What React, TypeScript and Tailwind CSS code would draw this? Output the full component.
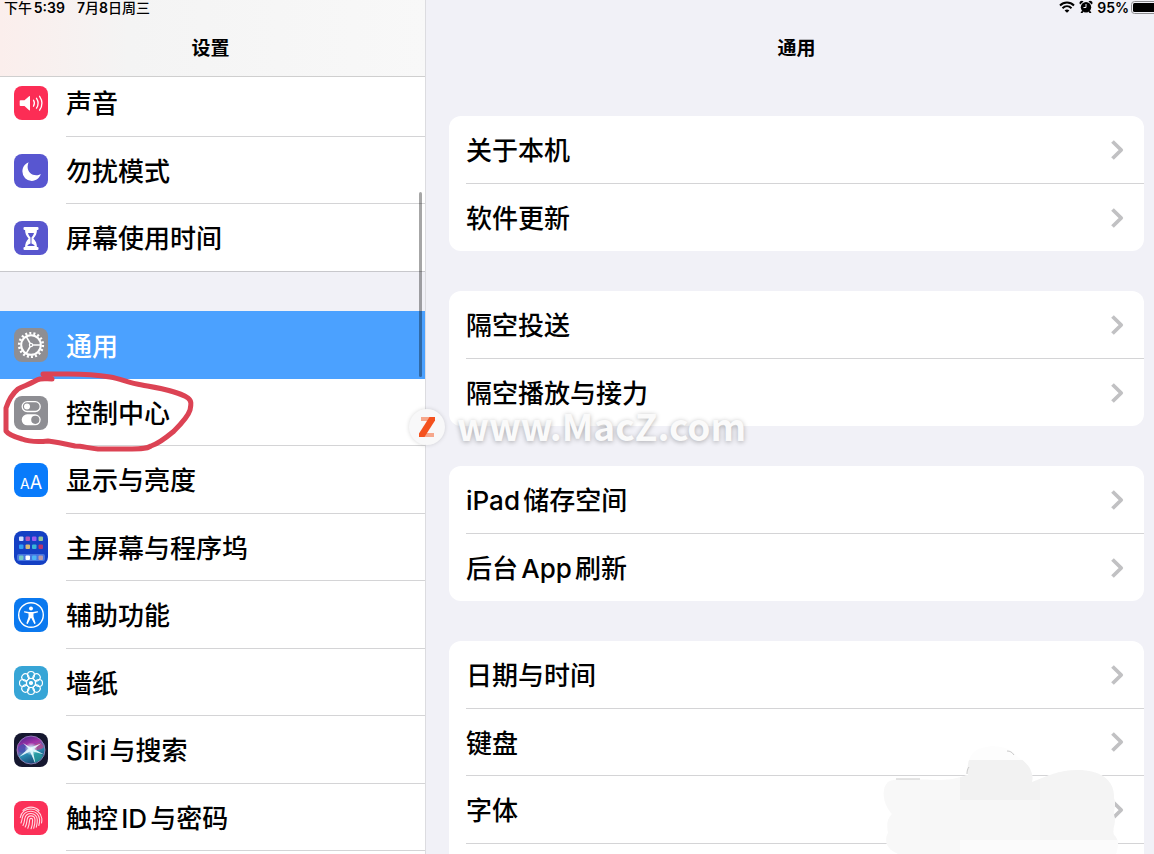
import type { ReactNode } from "react";

type Item = { label: string; icon: ReactNode; tile: string; circled?: boolean };

/* Sidebar icons, all on a 34x34 tile */

const SoundIcon = () => (
  <svg viewBox="0 0 34 34" className="size-full" fill="none" stroke="#fff" strokeLinecap="round">
    <path d="M6.5 14.3h4l4.6-4.1c.5-.4.9-.2.9.5v13c0 .7-.4.9-.9.5l-4.6-4.1h-4c-.5 0-.8-.3-.8-.8V15c0-.4.3-.7.8-.7z" fill="#fff" stroke="none" />
    <path d="M19.5 14.2c1.1 1.8 1.1 4.2 0 6M22.5 12.3c2 3 2 6.8 0 9.8M25.6 10.3c2.9 4.2 2.9 9.6 0 13.8" strokeWidth="1.3" />
  </svg>
);

const MoonIcon = () => (
  <svg viewBox="0 0 34 34" className="size-full">
    <path d="M14.6 8.3a10 10 0 0 0-1 4.5c0 5 4 8.5 8.6 8.5 1.7 0 3.2-.3 4.6-1.2-1.3 4.2-4.7 6.8-9 6.8A9.4 9.4 0 0 1 8.4 17.5c0-4.2 2.5-7.7 6.2-9.2z" fill="#fff" />
  </svg>
);

const HourglassIcon = () => (
  <svg viewBox="0 0 34 34" className="size-full" fill="#fff">
    <rect x="9.5" y="6" width="15" height="3" rx="1" />
    <rect x="9.5" y="26" width="15" height="3" rx="1" />
    <path d="M11 8h12c0 4.5-1.2 6.8-3.6 9.5 2.4 2.7 3.6 5 3.6 9.5H11c0-4.5 1.2-6.8 3.6-9.5C12.2 14.8 11 12.5 11 8z" />
    <path d="M14 12h6c-.4 1.7-1.4 3.2-2.5 4.4v6.2c1.5.5 2.7 1.3 3.3 2.4h-7.6c.6-1.1 1.8-1.9 3.3-2.4v-6.2C15.4 15.2 14.4 13.7 14 12z" fill="#5856ce" />
  </svg>
);

const GearIcon = () => (
  <svg viewBox="0 0 34 34" className="size-full" fill="none" stroke="#fff">
    <circle cx="17" cy="17" r="11.8" strokeWidth="2.6" strokeDasharray="2 2.119" />
    <circle cx="17" cy="17" r="9.8" strokeWidth="2" />
    <circle cx="17" cy="17" r="1.6" strokeWidth="1.2" />
    <path d="M18.500 17H26.500M16.200 15.500 12.300 8.700M16.200 18.500l-3.900 6.800" strokeWidth="1.6" />
  </svg>
);

const ControlIcon = () => (
  <svg viewBox="0 0 34 34" className="size-full">
    <rect x="8.2" y="5.7" width="18" height="9.8" rx="4.9" fill="none" stroke="#fff" strokeWidth="1.3" />
    <circle cx="13" cy="10.6" r="3" fill="#fff" />
    <rect x="7.7" y="18.3" width="19" height="11" rx="5.5" fill="#fff" />
    <circle cx="21.3" cy="23.8" r="4.1" fill="#8e8e93" />
  </svg>
);

const DisplayIcon = () => (
  <span className="flex size-full items-baseline justify-center pt-1.5 font-['Inter'] font-normal leading-6 text-white">
    <span className="text-sm">A</span>
    <span className="text-lg">A</span>
  </span>
);

const dots = [
  ["#cfe0ff", "#b356b8", "#9a5cf0", "#8fc49a"],
  ["#2f9df5", "#d6b878", "#38b6d8", "#b5336f"],
  ["#73c9c4", "#ffffff", "#4cb4f5", "#b99aa8"],
];

const HomeScreenIcon = () => (
  <svg viewBox="0 0 34 34" className="size-full">
    <rect x="3" y="23" width="28" height="7" rx="2" fill="#4775e0" />
    {dots.map((row, y) =>
      row.map((fill, x) => (
        <rect key={`${x}-${y}`} x={5 + x * 6.5} y={[5.5, 13.5, 24.5][y]} width="4.5" height="4.5" rx="1" fill={fill} />
      )),
    )}
  </svg>
);

const AccessibilityIcon = () => (
  <svg viewBox="0 0 34 34" className="size-full" fill="#fff">
    <circle cx="17" cy="17" r="12.3" fill="none" stroke="#fff" strokeWidth="1.4" />
    <circle cx="17" cy="10.5" r="2" />
    <path d="M10.7 13.2 15 13.9h4l4.3-.7c1-.1 1.1 1.2.2 1.4l-4 1v3.2l2 6c.3 1.1-1 1.5-1.4.6L17.3 20h-.6l-2.8 5.400c-.4.9-1.7.5-1.400-.6l2-6v-3.200l-4-1c-.9-.2-.8-1.500.2-1.400z" />
  </svg>
);

const WallpaperIcon = () => (
  <svg viewBox="0 0 34 34" className="size-full" fill="none" stroke="#fff" strokeWidth="1.2">
    {[0, 45, 90, 135, 180, 225, 270, 315].map((deg) => (
      <circle key={deg} cx="17" cy="9" r="3.5" transform={`rotate(${deg} 17 17)`} />
    ))}
    <circle cx="17" cy="17" r="4.5" />
    <circle cx="17" cy="17" r="1.5" fill="#fff" />
  </svg>
);

const SiriIcon = () => (
  <svg viewBox="0 0 34 34" className="size-full">
    <defs>
      <linearGradient id="orb" x1="0.2" y1="0" x2="0.6" y2="1">
        <stop offset="0" stopColor="#4a2690" />
        <stop offset="0.35" stopColor="#a834a8" />
        <stop offset="0.6" stopColor="#2a8fb4" />
        <stop offset="1" stopColor="#17406e" />
      </linearGradient>
      <radialGradient id="glow">
        <stop offset="0" stopColor="#fff" />
        <stop offset="0.4" stopColor="#d8f8ff" stopOpacity="0.7" />
        <stop offset="1" stopColor="#fff" stopOpacity="0" />
      </radialGradient>
    </defs>
    <circle cx="17" cy="17" r="14" fill="url(#orb)" stroke="#9f8cc4" strokeWidth="0.8" />
    <path d="M16 16C12 10 7 10 4 15c0 6 5 6 12 1z" fill="#3457b4" opacity="0.7" />
    <path d="M18 16c4-8 9-8 12-2-2 3-8 4-12 2z" fill="#c8408f" opacity="0.7" />
    <path d="M18 18c5 0 9 2 11 5-3 5-7 7-9 6z" fill="#2bb5a8" opacity="0.6" />
    <path d="M5 24 14.500 15.500 9 10l7.500 4.500L27 10.500l-7 5.500 10 5.500-11-3 2.500 12.500-5.500-12.500z" fill="#e9fdff" opacity="0.9" />
    <circle cx="17" cy="16" r="6.5" fill="url(#glow)" />
  </svg>
);

const TouchIdIcon = () => (
  <svg viewBox="0 0 34 34" className="size-full" fill="none" stroke="#ffdbe2" strokeWidth="1.1" strokeLinecap="round">
    <path d="M9 9.5C13.5 5 20.5 5 25 9.5" />
    <path d="M6.3 16.5C7.5 10.5 12 8 17 8s10 3.5 10.8 9.5c.2 1.5 0 3-.3 4.5" />
    <path d="M7 22c1-2.5 1-4 1.4-5.5.9-4 4.6-6.3 8.6-6.3 4.8 0 8.4 3.6 8.6 8.3.1 2-.2 4-.8 6" />
    <path d="M9 24.5c1.4-2.5 1.4-5 1.8-7 .6-3 3.2-5 6.2-5 3.5 0 6.2 2.7 6.3 6.3.1 2.5-.3 5-1 7.4" />
    <path d="M11.2 26c1.7-3 1.6-5.5 2-7.7.3-2 1.9-3.4 3.8-3.4 2.3 0 3.9 1.7 4 4 0 2.9-.4 5.7-1.3 8.3" />
    <path d="M13.8 27.2c1.5-3 1.5-5.7 1.8-8.2.1-1 .7-1.6 1.5-1.6.9 0 1.5.7 1.5 1.6 0 3-.4 6-1.5 8.8" />
  </svg>
);

const soundItems: Item[] = [
  { label: "声音", icon: <SoundIcon />, tile: "bg-[#fc2d55]" },
  { label: "勿扰模式", icon: <MoonIcon />, tile: "bg-[#5856d0]" },
  { label: "屏幕使用时间", icon: <HourglassIcon />, tile: "bg-[#5856ce]" },
];

const generalItems: Item[] = [
  { label: "通用", icon: <GearIcon />, tile: "bg-[#8e8e93]" },
  { label: "控制中心", icon: <ControlIcon />, tile: "bg-[#8e8e93]", circled: true },
  { label: "显示与亮度", icon: <DisplayIcon />, tile: "bg-[#097bfb]" },
  { label: "主屏幕与程序坞", icon: <HomeScreenIcon />, tile: "bg-[#1440c4]" },
  { label: "辅助功能", icon: <AccessibilityIcon />, tile: "bg-[#0b79ef]" },
  { label: "墙纸", icon: <WallpaperIcon />, tile: "bg-[#37a5d6]" },
  { label: "Siri与搜索", icon: <SiriIcon />, tile: "bg-[#15172f]" },
  { label: "触控ID与密码", icon: <TouchIdIcon />, tile: "bg-[#fb3058]" },
];

const detailGroups = [
  { labels: ["关于本机", "软件更新"] },
  { labels: ["隔空投送", "隔空播放与接力"] },
  { labels: ["iPad储存空间", "后台App刷新"] },
  { labels: ["日期与时间", "键盘", "字体"], continues: true },
];

function Scribble() {
  return (
    <svg
      viewBox="0 367 200 90"
      className="pointer-events-none absolute -top-3 left-0 z-10 h-[90px] w-[200px]"
      fill="none"
      stroke="#dc4354"
      strokeWidth="5"
      strokeLinecap="round"
      strokeLinejoin="round"
    >
      <path d="M43 374H68C82 374 92 374 110 377C122 379 128 383 142 385C158 388 178 391 188 398C192 401 191 405 190 410C188 417 180 425 174 431C168 436 160 443 151 446C146 449 140 449 132 449H98C88 448 82 446 75 446C66 444 57 442 48 441C39 442 30 442 22 439C15 437 8 434 6 431V408C8 402 12 394 18 389C24 386 30 384 37 380C41 378 46 379 52 379" />
    </svg>
  );
}

function SidebarRow({ item, selected, last }: { item: Item; selected?: boolean; last?: boolean }) {
  return (
    <li className="relative odd:h-[68px] even:h-[67px]">
      <a
        href="#"
        aria-current={selected ? "page" : undefined}
        className={`flex h-full items-center pl-3.5 ${selected ? "bg-[#4ba1ff] text-white" : "bg-white"} ${last ? "border-b border-[#c8c8cc]" : ""}`}
      >
        <span className={`size-[34px] shrink-0 overflow-hidden rounded-lg ${item.tile}`}>{item.icon}</span>
        <span
          className={`ml-[18px] flex h-full flex-1 items-center pt-[3px] ${selected || last ? "" : "border-b border-[#d4d4d6]"}`}
        >
          {item.label}
        </span>
      </a>
      {item.circled && <Scribble />}
    </li>
  );
}

function Chevron() {
  return (
    <svg viewBox="0 0 14 22" className="mr-5 h-[22px] w-3.5 shrink-0" fill="none" stroke="#c1c1c3" strokeWidth="3.8" strokeLinejoin="round">
      <path d="M2.5 2.5 11.2 11l-8.7 8.5" />
    </svg>
  );
}

function StatusIcons() {
  return (
    <div className="flex h-3.5 items-center justify-end overflow-hidden text-sm font-semibold leading-none">
      <svg viewBox="0 0 16 12" className="mr-1 h-3 w-4" fill="none" stroke="#000" strokeWidth="2">
        <path d="M1 4.5c4-4 10-4 14 0M3.5 7.2c2.6-2.5 6.4-2.5 9 0" />
        <path d="M8 11.8 5.6 9.4c1.4-1.2 3.4-1.2 4.8 0z" fill="#000" stroke="none" />
      </svg>
      <svg viewBox="0 0 14 14" className="mr-1 size-3.5" fill="#000">
        <circle cx="7" cy="7.3" r="5.2" />
        <path d="M1.2 4.5A2 2 0 0 1 4.5 1.5zM12.8 4.5A2 2 0 0 0 9.5 1.5zM3 10.5 1.5 13h2l1-1.200zM11 10.500l1.500 2.500h-2l-1-1.200z" />
        <path d="M7 4v3.500H4.500" fill="none" stroke="#f1f1f7" strokeWidth="1" />
      </svg>
      <span className="pt-px">95%</span>
      <svg viewBox="0 0 23 13" className="ml-0.5 h-[13px] w-[23px]">
        <rect x="0.5" y="0.5" width="27" height="12" rx="3" fill="none" stroke="#8d8d90" />
        <rect x="2" y="2" width="24" height="9" rx="1.5" fill="#000" />
      </svg>
    </div>
  );
}

function Watermark() {
  return (
    <div className="pointer-events-none absolute left-[409px] top-[403px] flex h-12 items-center gap-3">
      <span className="flex size-9 items-center justify-center rounded-full bg-[#f8f8f9] shadow-[0_0_4px_rgba(0,0,0,0.15)]">
        <svg viewBox="0 0 18 22" className="h-[22px] w-[18px]">
          <path d="M3 1h14v4H3z" fill="#f6a78c" />
          <path d="M1 17h15v4H1z" fill="#f6a78c" />
          <path d="M11.5 1H17v3.5L6.5 21H1v-3.5z" fill="#f4511e" />
        </svg>
      </span>
      <span className="pb-1 font-['Noto_Sans_CJK_SC'] text-[37px] font-bold text-[#fafafa] [text-shadow:0_1px_5px_rgba(0,0,0,0.3)]">
        www.MacZ.com
      </span>
    </div>
  );
}

/* Soft mosaic patch over the lower right corner */
function Smudge() {
  return (
    <svg viewBox="880 744 240 110" className="pointer-events-none absolute bottom-0 right-[34px] h-[110px] w-60">
      <defs>
        <clipPath id="smudge">
          <path d="M888 782C898 777 920 780 940 780C952 780 960 777 968 775C966 764 970 750 982 748C996 744 1010 747 1018 757C1030 764 1034 774 1032 782C1048 776 1058 770 1078 770C1100 770 1115 780 1114 798C1117 806 1112 812 1115 819C1115 826 1112 830 1114 835C1120 840 1118 848 1116 854H898C886 849 884 840 888 833C887 826 886 820 892 814C884 806 880 790 888 782Z" />
        </clipPath>
      </defs>
      <g clipPath="url(#smudge)">
        <path fill="#fdfdfd" d="M880 744h240v110H880z" />
        <path fill="#f8f8f8" d="M880 760h80v80h-80z" />
        <path fill="#f2f2f2" d="M960 760h80v40h-80z" />
        <path fill="#f4f4f4" d="M1040 760h80v40h-80z" />
        <path fill="#f7f7f7" d="M920 800h120v40H920z" />
        <path fill="#f5f5f5" d="M1040 800h80v40h-80z" />
        <path fill="#f8f8f8" d="M880 840h80v14h-80z" />
        <path fill="#fbfbfb" d="M960 840h160v14H960z" />
      </g>
      <path d="M967 774c0-3 .5-5 2-7M1007 751c3 0 5 1 7 4M896 779h24" fill="none" stroke="#c9c9c9" />
    </svg>
  );
}

export default function App() {
  return (
    <div className="relative flex h-screen overflow-hidden bg-[#f1f1f7] font-['Inter','Noto_Sans_CJK_SC',sans-serif] text-[26px] font-medium leading-8 text-black [text-autospace:normal]">
      {/* Sidebar */}
      <aside className="relative w-[426px] shrink-0 border-r border-[#dcdce0]">
        <header className="relative z-10 h-[77px] border-b border-[#cfcfcf] bg-[#f6f6f6] bg-linear-to-r from-[#fbeeec] via-[#f4f4f4] via-30% to-[#f8f8f8]">
          <div className="flex h-4 items-center gap-3 pl-1 text-sm font-semibold leading-none">
            <span>
              <span className="font-medium">下午</span>5:39
            </span>
            <span className="flex">
              7<span className="font-medium">月</span>8<span className="font-medium">日周三</span>
            </span>
          </div>
          <h1 className="pr-1 pt-[19px] text-center text-[19px] font-semibold leading-7">设置</h1>
        </header>
        <nav className="-mt-2">
          <ul>
            {soundItems.map((item, i) => (
              <SidebarRow key={item.label} item={item} last={i === soundItems.length - 1} />
            ))}
          </ul>
          <ul className="mt-[39px] bg-white pb-2">
            {generalItems.map((item, i) => (
              <SidebarRow key={item.label} item={item} selected={i === 0} />
            ))}
          </ul>
        </nav>
        <div className="absolute right-[3px] top-48 h-[185px] w-[3px] rounded-full bg-black/35" />
      </aside>

      {/* Detail pane */}
      <main className="min-w-0 flex-1">
        <header className="h-[116px]">
          <StatusIcons />
          <h2 className="pl-[23px] pr-2.5 pt-[21px] text-center text-[19px] font-semibold leading-7">通用</h2>
        </header>
        <div className="flex flex-col gap-10 pl-[23px] pr-2.5">
          {detailGroups.map(({ labels, continues }) => (
            <ul key={labels[0]} className={`overflow-hidden rounded-xl bg-white ${continues ? "pb-16" : ""}`}>
              {labels.map((label, i) => (
                <li key={label} className="odd:h-[68px] even:h-[67px]">
                  <a href="#" className="flex h-full pl-[17px]">
                    <span
                      className={`flex flex-1 items-center justify-between ${continues || i < labels.length - 1 ? "border-b border-[#d4d4d6]" : ""}`}
                    >
                      <span className="pt-[3px]">{label}</span>
                      <Chevron />
                    </span>
                  </a>
                </li>
              ))}
            </ul>
          ))}
        </div>
      </main>

      <Smudge />
      <Watermark />
    </div>
  );
}
